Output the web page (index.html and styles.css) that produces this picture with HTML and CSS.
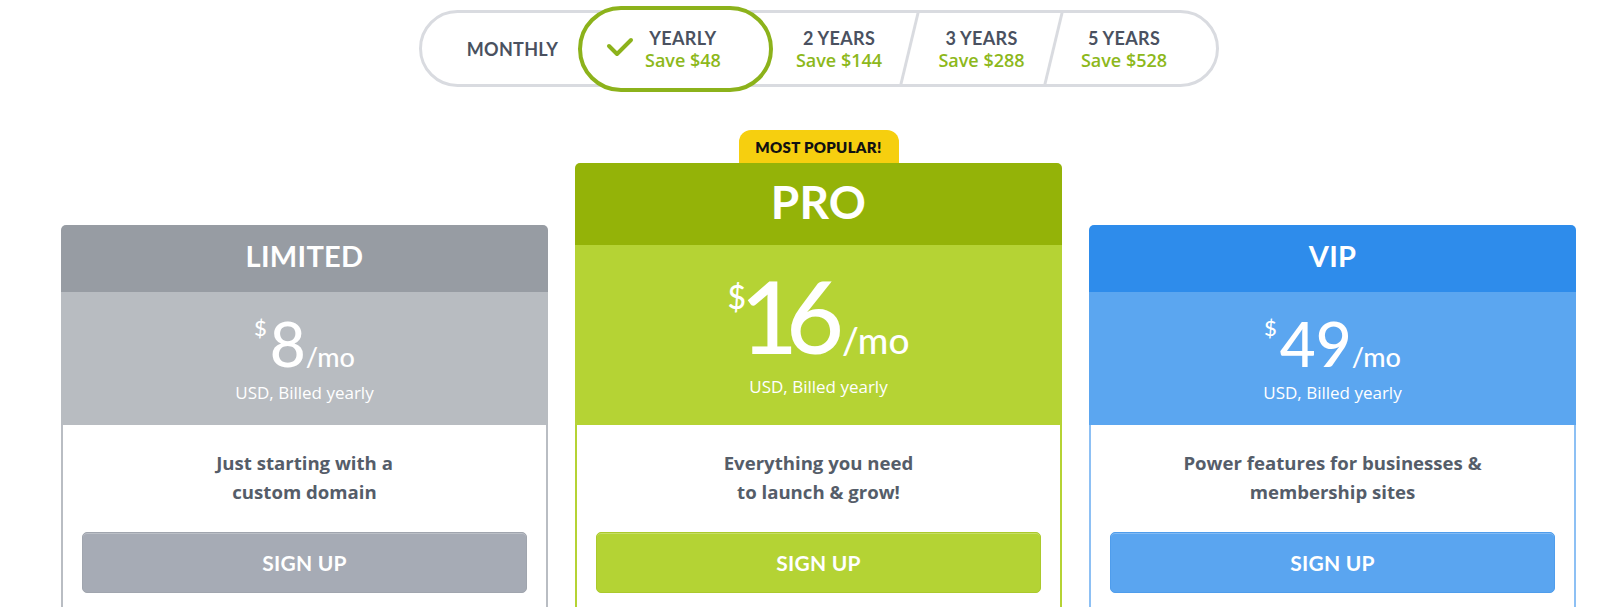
FILE: index.html
```html
<!DOCTYPE html>
<html lang="en">
<head>
<meta charset="utf-8">
<title>Pricing</title>
<link rel="stylesheet" href="styles.css">
</head>
<body>
<div class="page">
  <div class="toggle">
    <div class="seg seg-monthly"><span class="seg-title">MONTHLY</span></div>
    <div class="seg seg-active">
      <svg class="check" width="28" height="21" viewBox="0 0 28 21"><polyline points="3,9 11,17 25,3" fill="none" stroke="#8cb21b" stroke-width="4" stroke-linecap="round" stroke-linejoin="round"/></svg>
      <div class="seg-text"><div class="seg-title">YEARLY</div><div class="seg-save">Save $48</div></div>
    </div>
    <div class="seg seg-2y"><div class="seg-text"><div class="seg-title">2 YEARS</div><div class="seg-save">Save $144</div></div></div>
    <div class="divider"></div>
    <div class="seg seg-3y"><div class="seg-text"><div class="seg-title">3 YEARS</div><div class="seg-save">Save $288</div></div></div>
    <div class="divider"></div>
    <div class="seg seg-5y"><div class="seg-text"><div class="seg-title">5 YEARS</div><div class="seg-save">Save $528</div></div></div>
  </div>

  <div class="plans">
    <div class="plan plan-limited">
      <div class="plan-card">
        <div class="plan-head">LIMITED</div>
        <div class="plan-price">
          <div class="price"><span class="cur">$</span><span class="amt">8</span><span class="per">/mo</span></div>
          <div class="billed">USD, Billed yearly</div>
        </div>
        <div class="plan-body">
          <p class="desc">Just starting with a<br>custom domain</p>
          <a class="btn">SIGN UP</a>
        </div>
      </div>
    </div>

    <div class="plan plan-pro">
      <div class="badge">MOST POPULAR!</div>
      <div class="plan-card">
        <div class="plan-head">PRO</div>
        <div class="plan-price">
          <div class="price"><span class="cur">$</span><span class="amt">16</span><span class="per">/mo</span></div>
          <div class="billed">USD, Billed yearly</div>
        </div>
        <div class="plan-body">
          <p class="desc">Everything you need<br>to launch &amp; grow!</p>
          <a class="btn">SIGN UP</a>
        </div>
      </div>
    </div>

    <div class="plan plan-vip">
      <div class="plan-card">
        <div class="plan-head">VIP</div>
        <div class="plan-price">
          <div class="price"><span class="cur">$</span><span class="amt">49</span><span class="per">/mo</span></div>
          <div class="billed">USD, Billed yearly</div>
        </div>
        <div class="plan-body">
          <p class="desc">Power features for businesses &amp;<br>membership sites</p>
          <a class="btn">SIGN UP</a>
        </div>
      </div>
    </div>
  </div>
</div>
</body>
</html>
```
FILE: styles.css
```css
html, body {
  margin: 0;
  background: #fff;
  overflow: hidden;
}
body {
  font-family: "Open Sans", "Liberation Sans", sans-serif;
}
.page {
  padding-left: 61px;
  width: 1515px;
}

/* ---------- billing toggle ---------- */
.toggle {
  box-sizing: border-box;
  width: 800px;
  height: 77px;
  margin: 10px 0 0 358px;
  border: 3px solid #d9dbe0;
  border-radius: 40px;
  display: flex;
  align-items: center;
}
.seg {
  flex: none;
  display: flex;
  align-items: center;
  justify-content: center;
  text-align: center;
}
.seg-monthly {
  box-sizing: border-box;
  width: 156px;
  padding-left: 25px;
}
.seg-active {
  box-sizing: border-box;
  width: 195px;
  height: 86px;
  border: 4px solid #8cb21b;
  border-radius: 43px;
  background: #fff;
  justify-content: flex-start;
  padding-left: 24px;
  gap: 11px;
}
.check {
  flex: none;
  margin-top: -3px;
}
.seg-2y {
  box-sizing: border-box;
  width: 135px;
  padding-right: 3px;
}
.seg-3y { width: 141px; }
.seg-5y {
  flex: 1;
  box-sizing: border-box;
  padding-right: 23px;
}
.divider {
  flex: none;
  width: 3px;
  align-self: stretch;
  background: #d9dbe0;
  transform: skewX(-13.5deg);
}
.seg-title {
  font-family: Lato, "Liberation Sans", sans-serif;
  font-weight: 700;
  font-size: 18px;
  line-height: 22px;
  color: #4a5160;
  letter-spacing: 0.3px;
}
.seg-save {
  font-family: "Open Sans", sans-serif;
  font-weight: 600;
  font-size: 18px;
  line-height: 22px;
  color: #8db81b;
}

/* ---------- plans ---------- */
.plans {
  display: flex;
  align-items: flex-end;
  gap: 27px;
  margin-top: 43px;
}
.plan {
  width: 487px;
  display: flex;
  flex-direction: column;
  align-items: center;
}
.badge {
  box-sizing: border-box;
  width: 160px;
  height: 33px;
  background: #f6cf0f;
  border-radius: 12px 12px 0 0;
  font-family: Lato, sans-serif;
  font-weight: 800;
  font-size: 15px;
  line-height: 34px;
  text-align: center;
  color: #111;
  letter-spacing: 0.3px;
}
.plan-card {
  width: 100%;
  border-radius: 5px 5px 0 0;
  overflow: hidden;
}
.plan-head {
  box-sizing: border-box;
  height: 67px;
  line-height: 61px;
  padding-bottom: 6px;
  text-align: center;
  font-family: Lato, sans-serif;
  font-weight: 700;
  font-size: 29px;
  color: #fff;
  letter-spacing: 0.3px;
}
.plan-price {
  box-sizing: border-box;
  height: 133px;
  padding-top: 20px;
  text-align: center;
  color: #fff;
}
.price {
  font-family: Lato, sans-serif;
  font-weight: 500;
  font-size: 62px;
  line-height: 62px;
  height: 62px;
  white-space: nowrap;
}
.cur {
  font-size: 22px;
  line-height: 1;
  vertical-align: 31px;
  margin-right: 3px;
}
.amt {
  line-height: 1;
}
.per {
  font-size: 27px;
  line-height: 1;
}
.billed {
  margin-top: 8px;
  font-size: 17px;
  line-height: 22px;
}
.plan-body {
  border: 2px solid;
  border-top: 0;
  padding: 23px 19px 60px;
  text-align: center;
  background: #fff;
}
.desc {
  margin: 0;
  font-weight: 700;
  font-size: 18.6px;
  line-height: 29px;
  color: #555d69;
}
.btn {
  display: block;
  box-sizing: border-box;
  margin-top: 26px;
  height: 61px;
  border: 1px solid;
  border-radius: 5px;
  font-family: Lato, sans-serif;
  font-weight: 700;
  font-size: 21px;
  line-height: 59px;
  color: #fff;
  letter-spacing: 0.2px;
  box-shadow: inset 0 1px 0 rgba(255, 255, 255, 0.25);
}

/* PRO overrides */
.plan-pro .plan-head {
  height: 82px;
  line-height: 78px;
  padding-bottom: 4px;
  font-size: 46px;
}
.plan-pro .plan-price {
  height: 180px;
  padding-top: 18px;
}
.plan-pro .price {
  font-size: 100px;
  line-height: 104px;
  height: 104px;
}
.plan-pro .amt {
  letter-spacing: -12px;
}
.plan-pro .cur {
  font-size: 32px;
  vertical-align: 45px;
  margin-right: 0;
  letter-spacing: -6px;
}
.plan-pro .per {
  font-size: 37px;
  margin-left: 10px;
}
.plan-pro .billed {
  margin-top: 9px;
}

/* colour themes */
.plan-limited .plan-head { background: #979ca3; }
.plan-limited .plan-price { background: #b8bcc1; }
.plan-limited .plan-body { border-color: #b9bdc3; }
.plan-limited .btn { background: #a6abb5; border-color: #a0a5ae; }

.plan-pro .plan-head { background: #94b308; }
.plan-pro .plan-price { background: #b5d334; }
.plan-pro .plan-body { border-color: #b5d334; }
.plan-pro .btn { background: #b4d334; border-color: #abc92c; }

.plan-vip .plan-head { background: #2e8ceb; }
.plan-vip .plan-price { background: #5ba6f0; }
.plan-vip .plan-body { border-color: #8dc0f4; }
.plan-vip .btn { background: #5aa5f0; border-color: #4f9dec; }
```
